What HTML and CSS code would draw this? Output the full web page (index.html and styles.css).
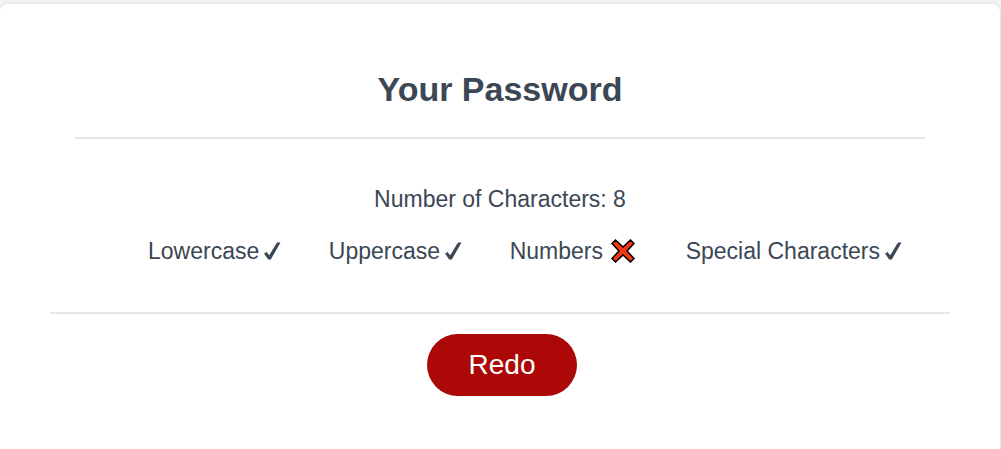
FILE: index.html
```html
<!DOCTYPE html>
<html lang="en">
<head>
<meta charset="utf-8">
<title>Your Password</title>
<link rel="stylesheet" href="styles.css">
</head>
<body>
<main class="card">
  <header class="card-header"><h1>Your Password</h1></header>
  <section class="result">
    <p class="length">Number of Characters: 8</p>
    <ul class="criteria">
      <li>Lowercase <svg class="check" viewBox="0 0 17 18" role="img" aria-label="yes"><path d="M0 11.500L2.600 10L5.200 13.200L13 0.500H16.500L6.800 17.500H4.200Z"/></svg></li>
      <li>Uppercase <svg class="check" viewBox="0 0 17 18" role="img" aria-label="yes"><path d="M0 11.500L2.600 10L5.200 13.200L13 0.500H16.500L6.800 17.500H4.200Z"/></svg></li>
      <li class="failed">Numbers <svg class="cross" viewBox="0 0 24 24" role="img" aria-label="no"><path d="M4.500 1L12 8L19.500 1L23 4.500L16 12L23 19.500L19.500 23L12 16L4.500 23L1 19.500L8 12L1 4.500Z"/></svg></li>
      <li>Special Characters <svg class="check" viewBox="0 0 17 18" role="img" aria-label="yes"><path d="M0 11.500L2.600 10L5.200 13.200L13 0.500H16.500L6.800 17.500H4.200Z"/></svg></li>
    </ul>
  </section>
  <footer class="card-footer"><button class="redo" type="button">Redo</button></footer>
</main>
</body>
</html>
```
FILE: styles.css
```css
* { box-sizing: border-box; }
body {
  margin: 0;
  padding-top: 4px;
  background: #f4f5f6;
  color: #3b4754;
  font-family: "Liberation Sans", Arial, sans-serif;
  font-size: 23px;
  line-height: 28px;
}
.card {
  margin-right: 1px;
  padding: 60px 50px 53px;
  border-radius: 8px 8px 0 0;
  background: #fff;
  box-shadow: 0 0 5px rgba(0, 0, 0, 0.12);
}
.card-header {
  margin: 0 25px;
  padding-bottom: 23px;
  border-bottom: 2px solid #e6e6e6;
  text-align: center;
}
h1 { margin: 0; font-size: 34px; line-height: 50px; }
.result { padding: 46px 48px 47px 98px; border-bottom: 2px solid #e6e6e6; }
.length { margin: 0 0 24px -50px; text-align: center; }
.criteria {
  display: flex;
  justify-content: space-between;
  margin: 0;
  padding: 0;
  list-style: none;
}
.criteria li { display: flex; align-items: center; gap: 5px; white-space: nowrap; }
.criteria .failed { gap: 8px; padding-right: 3px; }
.check { width: 17px; height: 18px; fill: #3b4754; }
.cross { width: 24px; height: 24px; fill: #f03a17; stroke: #000; stroke-width: 1.5; }
.card-footer { padding: 20px 0 0 4px; text-align: center; }
.redo {
  height: 62px;
  padding: 0 42px;
  border: 0;
  border-radius: 31px;
  background: #ad0808;
  color: #fff;
  font: 28px "Liberation Sans", Arial, sans-serif;
}
```
